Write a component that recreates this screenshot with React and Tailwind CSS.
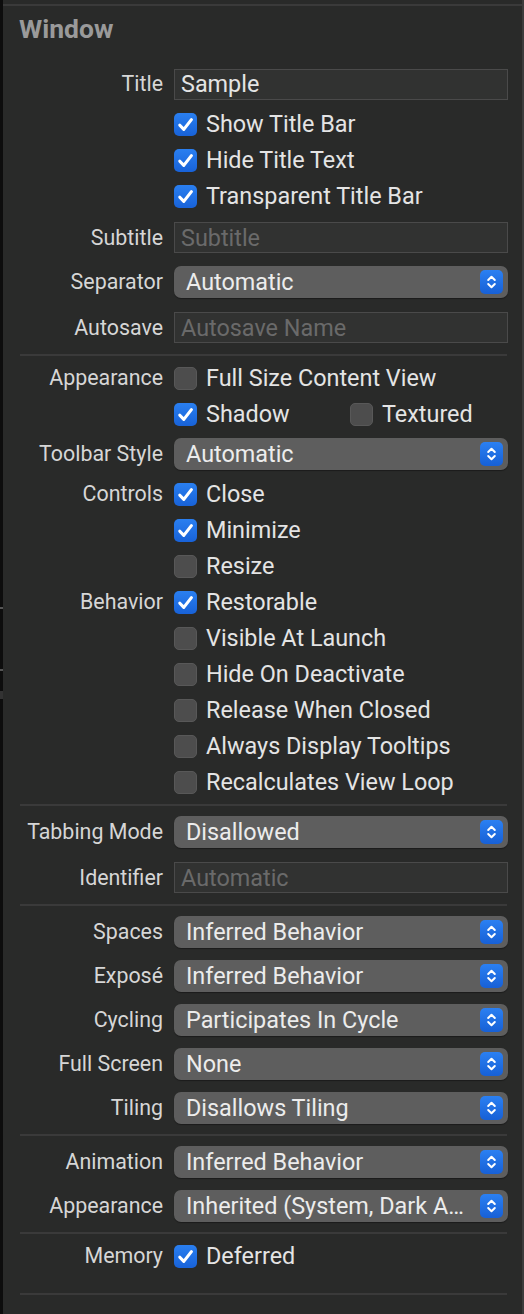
import React from 'react'

const font = { fontFamily: 'Roboto, "Liberation Sans", Arial, sans-serif' }

const Check = ({ on }) =>
  on ? (
    <div className="w-[23px] h-[23px] rounded-[5px] bg-gradient-to-b from-[#2a7ff0] to-[#1862d8] shrink-0 flex items-center justify-center">
      <svg width="23" height="23" viewBox="0 0 23 23">
        <path d="M5.8 12.2 L9.8 16.4 L17.4 6.6" fill="none" stroke="#fff" strokeWidth="3.1" strokeLinecap="round" strokeLinejoin="round" />
      </svg>
    </div>
  ) : (
    <div className="w-[23px] h-[23px] rounded-[5px] bg-[#4d4d4d] border border-[#585858] shrink-0" />
  )

const Label = ({ children }) => (
  <div className="w-[160px] shrink-0 text-right text-[21.4px] text-[#d6d6d6] leading-[28px]">{children}</div>
)

const Row = ({ label, h, mt, children }) => (
  <div className={`flex items-center ${h} ${mt}`}>
    <Label>{label}</Label>
    <div className="ml-[11px] w-[334px] flex items-center">{children}</div>
  </div>
)

const CheckItem = ({ on, text }) => (
  <div className="flex items-center gap-[9px]">
    <Check on={on} />
    <span className="text-[23.4px] text-[#e4e4e4] leading-[28px] whitespace-nowrap">{text}</span>
  </div>
)

const Field = ({ value, placeholder }) => (
  <div className="w-full h-[31px] bg-[#313231] border border-[#4a4a4a] flex items-center pl-[6px]">
    {value ? (
      <span className="text-[23.4px] text-[#e4e4e4] leading-[28px]">{value}</span>
    ) : (
      <span className="text-[23.4px] text-[#6a6a6a] leading-[28px]">{placeholder}</span>
    )}
  </div>
)

const Popup = ({ value }) => (
  <div className="w-full h-[32px] rounded-[7px] bg-[#5e5e5e] shadow-[0_1px_1px_rgba(0,0,0,0.35)] flex items-center pl-[12px] pr-[5px]">
    <span className="flex-1 text-[23.4px] text-[#ececec] leading-[30px] whitespace-nowrap">{value}</span>
    <div className="w-[23px] h-[24px] rounded-[5px] bg-gradient-to-b from-[#2b80f2] to-[#1760d6] flex items-center justify-center shrink-0">
      <svg width="23" height="24" viewBox="0 0 23 24">
        <path d="M8.2 10 L11.5 6.7 L14.8 10" fill="none" stroke="#fff" strokeWidth="2" strokeLinecap="round" strokeLinejoin="round" />
        <path d="M8.2 14 L11.5 17.3 L14.8 14" fill="none" stroke="#fff" strokeWidth="2" strokeLinecap="round" strokeLinejoin="round" />
      </svg>
    </div>
  </div>
)

const Line = ({ mt }) => <div className={`ml-[17px] w-[487px] h-[2px] bg-[#3a3a3a] ${mt}`} />

export default function App() {
  return (
    <div className="w-[524px] h-[1314px] bg-[#292a29] flex overflow-hidden" style={font}>
      {/* left window edge */}
      <div className="w-[3px] shrink-0 bg-[#0d0d0d] flex flex-col">
        <div className="h-[607px]" />
        <div className="h-[2px] bg-[#555]" />
        <div className="h-[60px]" />
        <div className="h-[2px] bg-[#555]" />
        <div className="h-[20px]" />
        <div className="h-[8px] bg-[#333]" />
      </div>

      <div className="flex-1 flex flex-col">
        <div className="h-[4px]" />
        <div className="h-[2px] bg-[#3a3a3a]" />

        {/* header */}
        <div className="h-[46px] flex items-center pl-[16px]">
          <span className="text-[26.5px] font-bold text-[#9a9a9a] leading-[30px]">Window</span>
        </div>

        <Row label="Title" h="h-[32px]" mt="mt-[16px]"><Field value="Sample" /></Row>
        <Row label="" h="h-[36px]" mt="mt-[6px]"><CheckItem on text="Show Title Bar" /></Row>
        <Row label="" h="h-[36px]" mt=""><CheckItem on text="Hide Title Text" /></Row>
        <Row label="" h="h-[36px]" mt=""><CheckItem on text="Transparent Title Bar" /></Row>
        <Row label="Subtitle" h="h-[31px]" mt="mt-[8px]"><Field placeholder="Subtitle" /></Row>
        <Row label="Separator" h="h-[32px]" mt="mt-[13px]"><Popup value="Automatic" /></Row>
        <Row label="Autosave" h="h-[31px]" mt="mt-[14px]"><Field placeholder="Autosave Name" /></Row>

        <Line mt="mt-[11px]" />

        <Row label="Appearance" h="h-[36px]" mt="mt-[4px]"><CheckItem text="Full Size Content View" /></Row>
        <Row label="" h="h-[36px]" mt="">
          <div className="w-[176px]"><CheckItem on text="Shadow" /></div>
          <CheckItem text="Textured" />
        </Row>
        <Row label="Toolbar Style" h="h-[32px]" mt="mt-[6px]"><Popup value="Automatic" /></Row>
        <Row label="Controls" h="h-[36px]" mt="mt-[6px]"><CheckItem on text="Close" /></Row>
        <Row label="" h="h-[36px]" mt=""><CheckItem on text="Minimize" /></Row>
        <Row label="" h="h-[36px]" mt=""><CheckItem text="Resize" /></Row>
        <Row label="Behavior" h="h-[36px]" mt=""><CheckItem on text="Restorable" /></Row>
        <Row label="" h="h-[36px]" mt=""><CheckItem text="Visible At Launch" /></Row>
        <Row label="" h="h-[36px]" mt=""><CheckItem text="Hide On Deactivate" /></Row>
        <Row label="" h="h-[36px]" mt=""><CheckItem text="Release When Closed" /></Row>
        <Row label="" h="h-[36px]" mt=""><CheckItem text="Always Display Tooltips" /></Row>
        <Row label="" h="h-[36px]" mt=""><CheckItem text="Recalculates View Loop" /></Row>

        <Line mt="mt-[4px]" />

        <Row label="Tabbing Mode" h="h-[32px]" mt="mt-[10px]"><Popup value="Disallowed" /></Row>
        <Row label="Identifier" h="h-[31px]" mt="mt-[14px]"><Field placeholder="Automatic" /></Row>

        <Line mt="mt-[11px]" />

        <Row label="Spaces" h="h-[32px]" mt="mt-[10px]"><Popup value="Inferred Behavior" /></Row>
        <Row label="Exposé" h="h-[32px]" mt="mt-[12px]"><Popup value="Inferred Behavior" /></Row>
        <Row label="Cycling" h="h-[32px]" mt="mt-[12px]"><Popup value="Participates In Cycle" /></Row>
        <Row label="Full Screen" h="h-[32px]" mt="mt-[12px]"><Popup value="None" /></Row>
        <Row label="Tiling" h="h-[32px]" mt="mt-[12px]"><Popup value="Disallows Tiling" /></Row>

        <Line mt="mt-[10px]" />

        <Row label="Animation" h="h-[32px]" mt="mt-[10px]"><Popup value="Inferred Behavior" /></Row>
        <Row label="Appearance" h="h-[32px]" mt="mt-[12px]"><Popup value="Inherited (System, Dark A…" /></Row>

        <Line mt="mt-[10px]" />

        <Row label="Memory" h="h-[36px]" mt="mt-[4px]"><CheckItem on text="Deferred" /></Row>

        <Line mt="mt-[19px]" />
      </div>

      {/* right window edge */}
      <div className="w-[2px] shrink-0 bg-[#3c3c3c]" />
    </div>
  )
}
